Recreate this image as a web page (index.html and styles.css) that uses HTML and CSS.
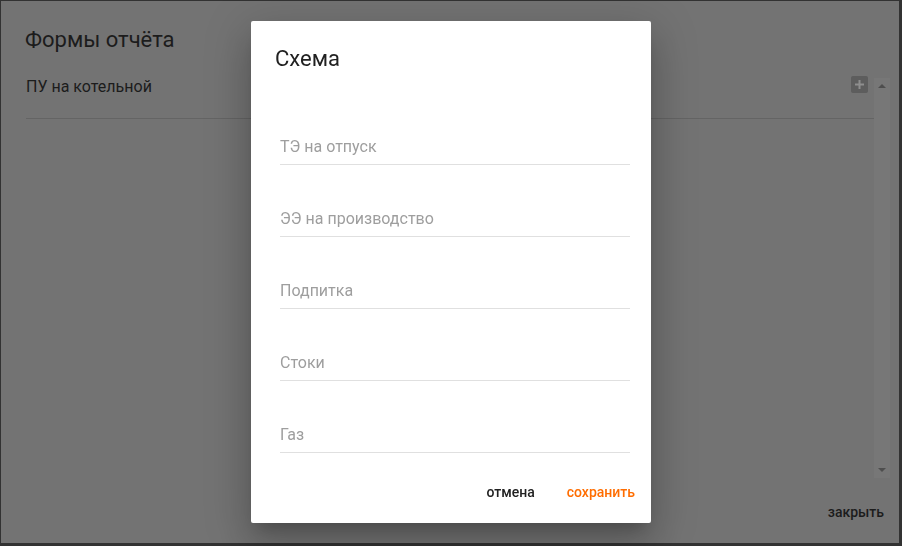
FILE: index.html
```html
<!DOCTYPE html>
<html lang="ru">
<head>
    <meta charset="UTF-8">
    <meta name="viewport" content="width=device-width, initial-scale=1.0">
    <title>Формы отчёта</title>
    <link rel="stylesheet" href="styles.css">
</head>
<body>
    <!-- Background dialog, dimmed -->
    <div class="backdrop">
        <h1 class="backdrop-title">Формы отчёта</h1>
        <div class="report-row">
            <span class="report-name">ПУ на котельной</span>
            <span class="add-btn">
                <svg width="11" height="11" viewBox="0 0 11 11"><path d="M5.5 1v9M1 5.5h9" stroke="#8e8e8e" stroke-width="2"/></svg>
            </span>
        </div>
        <div class="report-body">
            <div class="report-list"></div>
            <div class="scrollbar">
                <span class="arrow arrow-up"></span>
                <span class="arrow arrow-down"></span>
            </div>
        </div>
        <div class="backdrop-footer">
            <span class="close-btn">закрыть</span>
        </div>
    </div>

    <!-- Modal -->
    <div class="modal">
        <h2 class="modal-title">Схема</h2>
        <form class="modal-form">
            <div class="field"><span class="placeholder">ТЭ на отпуск</span></div>
            <div class="field"><span class="placeholder">ЭЭ на производство</span></div>
            <div class="field"><span class="placeholder">Подпитка</span></div>
            <div class="field"><span class="placeholder">Стоки</span></div>
            <div class="field"><span class="placeholder">Газ</span></div>
        </form>
        <div class="modal-actions">
            <button type="button" class="btn">отмена</button>
            <button type="button" class="btn btn-primary">сохранить</button>
        </div>
    </div>
</body>
</html>
```

FILE: styles.css
```css
/* General Body Style */
body {
    margin: 0;
    padding: 1px 3px 3px 1px;
    background-color: #323232;
    font-family: 'Roboto', 'Liberation Sans', sans-serif;
    height: 546px;
    box-sizing: border-box;
    overflow: hidden;
}

/* Dimmed background dialog */
.backdrop {
    height: 100%;
    background-color: #737373;
    color: #1c1c1c;
    display: flex;
    flex-direction: column;
    padding: 0 9px 0 24px;
    box-sizing: border-box;
}

.backdrop-title {
    margin: 0;
    padding-top: 25px;
    font-size: 22px;
    font-weight: 400;
    line-height: 28px;
}

.report-row {
    display: flex;
    align-items: center;
    justify-content: space-between;
    margin-top: 22px;
    padding-left: 1px;
    padding-right: 22px;
}

.report-name {
    font-size: 16px;
    line-height: 20px;
}

.add-btn {
    width: 17px;
    height: 17px;
    margin-bottom: 5px;
    background-color: #5d5d5d;
    border-radius: 2px;
    display: flex;
    align-items: center;
    justify-content: center;
}

.report-body {
    display: flex;
    flex: 1;
    padding-left: 1px;
    margin-top: -20px;
}

.report-list {
    flex: 1;
    margin-top: 40px;
    border-top: 1px solid #646464;
    height: 0;
}

.scrollbar {
    width: 16px;
    height: 400px;
    background-color: #777777;
    position: relative;
}

.arrow {
    position: absolute;
    left: 4px;
    width: 0;
    height: 0;
    border-left: 4px solid transparent;
    border-right: 4px solid transparent;
}

.arrow-up {
    top: 6px;
    border-bottom: 4px solid #4e4e4e;
}

.arrow-down {
    bottom: 6px;
    border-top: 4px solid #4e4e4e;
}

.backdrop-footer {
    display: flex;
    justify-content: flex-end;
    padding-right: 6px;
    padding-bottom: 21px;
}

.close-btn {
    font-size: 14px;
    font-weight: 500;
    line-height: 20px;
}

/* Modal */
.modal {
    position: fixed;
    left: 251px;
    top: 21px;
    width: 400px;
    height: 502px;
    background-color: white;
    border-radius: 2px;
    box-shadow: 0 11px 15px -7px rgba(0, 0, 0, 0.2), 0 24px 38px 3px rgba(0, 0, 0, 0.14), 0 9px 46px 8px rgba(0, 0, 0, 0.12);
    box-sizing: border-box;
    padding: 24px 21px 0 24px;
    display: flex;
    flex-direction: column;
}

.modal-title {
    margin: 0;
    font-size: 22px;
    font-weight: 400;
    line-height: 28px;
    color: #212121;
}

.modal-form {
    padding-left: 5px;
    margin-top: 20px;
}

.field {
    margin-top: 43px;
    padding-bottom: 6px;
    border-bottom: 1px solid #e0e0e0;
}

.placeholder {
    display: block;
    font-size: 16px;
    line-height: 22px;
    color: #9e9e9e;
}

.modal-actions {
    display: flex;
    justify-content: flex-end;
    gap: 16px;
    margin-top: auto;
    margin-right: -13px;
    padding-bottom: 21px;
}

.btn {
    font-family: inherit;
    font-size: 14px;
    font-weight: 500;
    line-height: 20px;
    padding: 0 8px;
    border: none;
    background: none;
    color: #212121;
    cursor: pointer;
}

.btn-primary {
    color: #ff6d00;
}
```
